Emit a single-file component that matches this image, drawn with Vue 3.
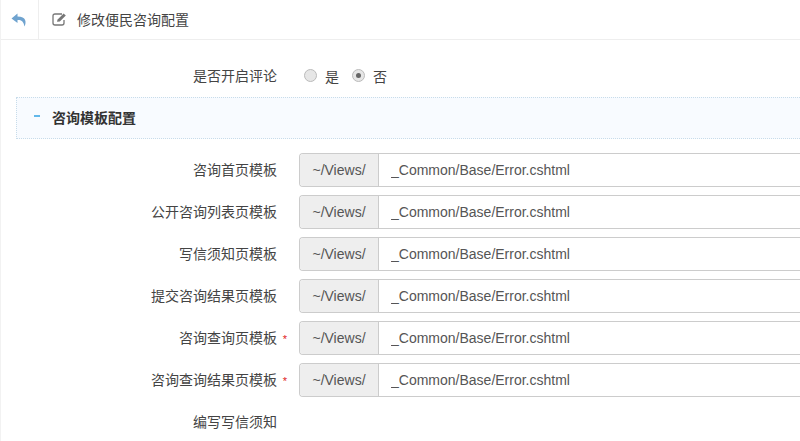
<script setup>
const rows = [
  { label: '咨询首页模板' },
  { label: '公开咨询列表页模板' },
  { label: '写信须知页模板' },
  { label: '提交咨询结果页模板' },
  { label: '咨询查询页模板', required: true },
  { label: '咨询查询结果页模板', required: true },
]
</script>

<template>
  <div class="page">
    <header class="topbar">
      <div class="back">
        <svg width="16" height="14" viewBox="0 0 16 14">
          <path d="M6.5 0.5 L0.5 5.5 L6.5 10 L6.5 7 C10 6.8 12.5 8 13.5 13.5 C15.5 9.5 15.5 3.5 6.5 3.5 Z" fill="#6fa3cf" />
        </svg>
      </div>
      <div class="title">
        <svg class="edit" width="15" height="14" viewBox="0 0 15 14">
          <path d="M10 2 H3 Q1 2 1 4 V11 Q1 13 3 13 H10 Q12 13 12 11 V8" fill="none" stroke="#777" stroke-width="1.3" />
          <path d="M5 9.8 L5.6 7.4 L11.6 1.4 L13.8 3.6 L7.8 9.4 Z" fill="#777" />
        </svg>
        <span>修改便民咨询配置</span>
      </div>
    </header>

    <div class="body">
      <div class="radio-row">
        <label class="row-label">是否开启评论</label>
        <div class="radios">
          <span class="radio"></span>
          <span class="radio-text">是</span>
          <span class="radio checked"></span>
          <span class="radio-text">否</span>
        </div>
      </div>

      <div class="section">
        <span class="dash"></span>
        <b>咨询模板配置</b>
      </div>

      <div class="fields">
        <div v-for="row in rows" :key="row.label" class="field">
          <label class="row-label">
            {{ row.label }}
            <i v-if="row.required" class="req">*</i>
          </label>
          <div class="input-group">
            <span class="addon">~/Views/</span>
            <input class="input" type="text" value="_Common/Base/Error.cshtml" />
          </div>
        </div>
      </div>

      <div class="last-row">
        <label class="row-label">编写写信须知</label>
      </div>
    </div>
  </div>
</template>

<style>
html, body {
  margin: 0;
  background: #fff;
  overflow: hidden;
}
</style>

<style scoped>
.page {
  width: 800px;
  height: 441px;
  overflow: hidden;
  font-family: "Liberation Sans", "Noto Sans CJK SC", sans-serif;
  font-size: 14px;
  color: #444;
  box-sizing: border-box;
  border-left: 1px solid #f2f2f2;
}

.topbar {
  display: flex;
  height: 39px;
  border-bottom: 1px solid #eee;
  box-sizing: content-box;
}

.back {
  width: 36px;
  border-right: 1px solid #eee;
  display: flex;
  align-items: center;
  justify-content: center;
  padding-right: 1px;
}

.title {
  display: flex;
  align-items: center;
  padding-left: 13px;
  padding-bottom: 2px;
  color: #444;
}

.edit {
  margin-right: 10px;
}

.body {
  padding: 0 0 0 15px;
}

.radio-row {
  display: flex;
  align-items: center;
  height: 57px;
  padding-top: 14px;
  box-sizing: border-box;
}

.row-label {
  width: 283px;
  text-align: right;
  padding-right: 22px;
  margin-bottom: 2px;
  box-sizing: border-box;
  position: relative;
  flex-shrink: 0;
}

.radios {
  display: flex;
  align-items: center;
  padding-left: 5px;
}

.radio {
  width: 11px;
  height: 11px;
  border-radius: 50%;
  border: 1px solid #bbb;
  background: #e6e6e6;
  margin-right: 8px;
  position: relative;
  flex-shrink: 0;
}

.radio.checked::after {
  content: "";
  position: absolute;
  left: 3px;
  top: 3px;
  width: 5px;
  height: 5px;
  border-radius: 50%;
  background: #666;
}

.radio-text {
  margin-right: 13px;
}

.section {
  height: 42px;
  display: flex;
  align-items: center;
  background: #f8fbff;
  border-top: 1px dotted #c8dcea;
  border-bottom: 1px dotted #c8dcea;
  border-left: 1px dotted #c8dcea;
  box-sizing: border-box;
  padding-bottom: 2px;
  margin-bottom: 14px;
}

.dash {
  width: 6px;
  height: 2px;
  background: #62b8ea;
  margin: 0 12px 0 17px;
  position: relative;
  top: -1px;
}

.section b {
  font-weight: bold;
  color: #333;
}

.fields {
  display: flex;
  flex-direction: column;
  gap: 8px;
}

.field {
  display: flex;
  align-items: center;
  height: 34px;
}

.req {
  position: absolute;
  right: 12px;
  top: 6px;
  color: #e02222;
  font-size: 11px;
  font-style: normal;
}

.input-group {
  display: flex;
  flex: 1;
  height: 34px;
  box-sizing: border-box;
  border: 1px solid #ccc;
  border-right: none;
  border-radius: 4px 0 0 4px;
  overflow: hidden;
}

.addon {
  width: 78px;
  background: #eee;
  border-right: 1px solid #ccc;
  display: flex;
  align-items: center;
  justify-content: center;
  font-size: 14px;
  color: #555;
  flex-shrink: 0;
}

.input {
  flex: 1;
  border: none;
  outline: none;
  padding: 0 12px;
  font-family: inherit;
  font-size: 14px;
  color: #555;
  min-width: 0;
}

.last-row {
  display: flex;
  align-items: center;
  height: 34px;
  margin-top: 8px;
}
</style>
